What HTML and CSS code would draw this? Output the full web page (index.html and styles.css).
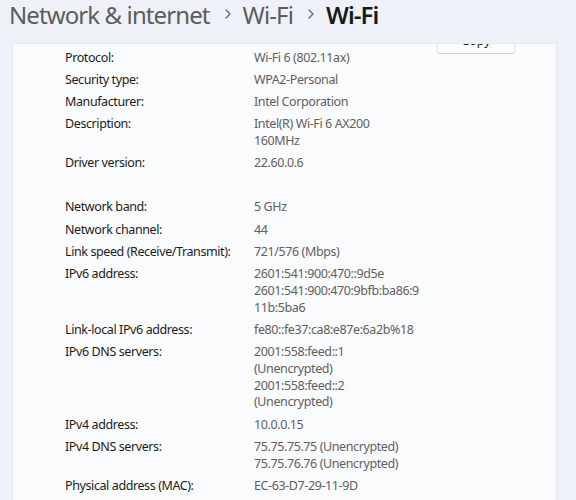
FILE: index.html
```html
<!DOCTYPE html>
<html lang="en">
<head>
<meta charset="utf-8">
<title>Wi-Fi properties</title>
<link rel="stylesheet" href="styles.css">
</head>
<body>
<div class="page">
  <header class="crumbs">
    <span class="crumb">Network &amp; internet</span>
    <svg class="chev" width="6" height="10" viewBox="0 0 6 10"><path d="M1 1 L5 5 L1 9" fill="none" stroke="#5f5f5f" stroke-width="1.2" stroke-linecap="round" stroke-linejoin="round"/></svg>
    <span class="crumb">Wi-Fi</span>
    <svg class="chev" width="6" height="10" viewBox="0 0 6 10"><path d="M1 1 L5 5 L1 9" fill="none" stroke="#5f5f5f" stroke-width="1.2" stroke-linecap="round" stroke-linejoin="round"/></svg>
    <span class="crumb current">Wi-Fi</span>
  </header>
  <section class="card">
    <div class="card-inner">
      <dl class="props">
        <dt>Protocol:</dt><dd>Wi-Fi 6 (802.11ax)</dd>
        <dt>Security type:</dt><dd>WPA2-Personal</dd>
        <dt>Manufacturer:</dt><dd>Intel Corporation</dd>
        <dt>Description:</dt><dd><span class="ln">Intel(R) Wi-Fi 6 AX200</span><span class="ln">160MHz</span></dd>
        <dt>Driver version:</dt><dd>22.60.0.6</dd>
        <dt class="blank"></dt><dd class="blank"></dd>
        <dt>Network band:</dt><dd>5 GHz</dd>
        <dt>Network channel:</dt><dd>44</dd>
        <dt>Link speed (Receive/Transmit):</dt><dd>721/576 (Mbps)</dd>
        <dt>IPv6 address:</dt><dd><span class="ln">2601:541:900:470::9d5e</span><span class="ln">2601:541:900:470:9bfb:ba86:9</span><span class="ln">11b:5ba6</span></dd>
        <dt>Link-local IPv6 address:</dt><dd>fe80::fe37:ca8:e87e:6a2b%18</dd>
        <dt>IPv6 DNS servers:</dt><dd><span class="ln">2001:558:feed::1</span><span class="ln">(Unencrypted)</span><span class="ln">2001:558:feed::2</span><span class="ln">(Unencrypted)</span></dd>
        <dt>IPv4 address:</dt><dd>10.0.0.15</dd>
        <dt>IPv4 DNS servers:</dt><dd><span class="ln">75.75.75.75 (Unencrypted)</span><span class="ln">75.75.76.76 (Unencrypted)</span></dd>
        <dt>Physical address (MAC):</dt><dd>EC-63-D7-29-11-9D</dd>
      </dl>
      <button class="copy" type="button">Copy</button>
    </div>
  </section>
</div>
</body>
</html>
```
FILE: styles.css
```css
html, body {
  margin: 0;
  padding: 0;
}
body {
  width: 576px;
  height: 500px;
  overflow: hidden;
  background: #eef2f8;
  font-family: "Noto Sans", "Open Sans", sans-serif;
}
.page {
  display: flex;
  flex-direction: column;
  gap: 12.4px;
}
.crumbs {
  display: flex;
  align-items: center;
  margin-top: -2.4px;
  padding-left: 9px;
  height: 33px;
  line-height: 33px;
  font-size: 24px;
  letter-spacing: -0.9px;
  color: #5c5c5c;
}
.crumb.current {
  color: #1a1a1a;
  font-weight: 600;
}
.chev {
  margin: 0 12px 0 15px;
}
.card {
  margin-left: 12px;
  width: 543px;
  height: 470px;
  background: #fafbfd;
  border: 1px solid #e6e9ef;
  border-bottom: none;
  overflow: hidden;
}
.card-inner {
  display: flex;
  align-items: flex-start;
  margin-top: -22px;
  padding-left: 52px;
}
.props {
  margin: 0;
  padding-top: 27.5px;
  display: grid;
  grid-template-columns: 189px 183px;
  row-gap: 5.4px;
  font-size: 12.5px;
  line-height: 16.8px;
  letter-spacing: -0.4px;
}
.props dt {
  color: #1c1c1c;
}
.props dd {
  margin: 0;
  color: #606060;
}
.props .blank {
  height: 16.8px;
}
.ln {
  display: block;
}
.copy {
  flex: none;
  width: 78px;
  height: 32px;
  padding: 5px 0 0;
  background: #fdfdfd;
  border: 1px solid #e3e3e3;
  border-bottom-color: #d0d0d0;
  border-radius: 4px;
  font-family: "Noto Sans", "Open Sans", sans-serif;
  font-size: 12.5px;
  line-height: 16px;
  color: #1c1c1c;
}
```
